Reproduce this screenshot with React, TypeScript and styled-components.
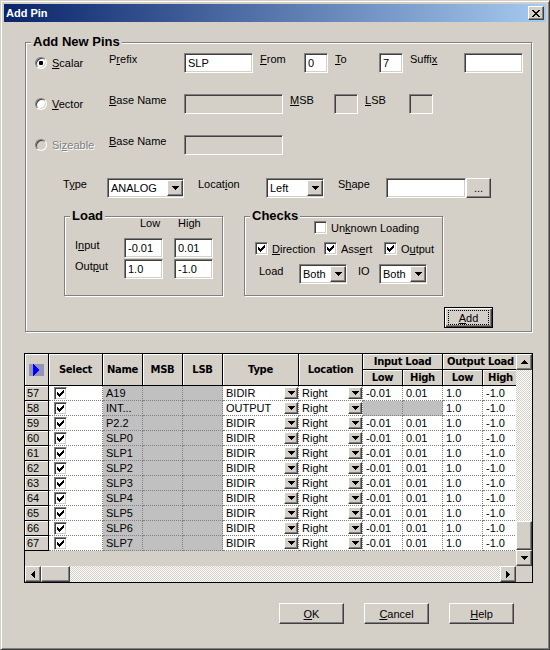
import React from 'react';
import styled, { createGlobalStyle, css } from 'styled-components';

const FACE = '#D4D0C8';
const SHADOW = '#808080';
const DARK = '#404040';
const UI_FONT = '"Liberation Sans", Arial, sans-serif';
const GRID_FONT = '"DejaVu Sans", Verdana, sans-serif';

const GlobalStyle = createGlobalStyle`
  html, body {
    margin: 0;
    padding: 0;
    background: ${FACE};
  }
  * {
    box-sizing: border-box;
  }
`;

const raised = css`
  border: 1px solid;
  border-color: #fff ${DARK} ${DARK} #fff;
  box-shadow: inset -1px -1px ${SHADOW};
  background: ${FACE};
`;

const sunken = css`
  border: 1px solid;
  border-color: ${SHADOW} #fff #fff ${SHADOW};
  box-shadow: inset 1px 1px ${DARK}, inset -1px -1px ${FACE};
`;

const checker = css`
  background-image: repeating-conic-gradient(#fff 0% 25%, ${FACE} 0% 50%);
  background-size: 2px 2px;
`;

const Window = styled.div`
  width: 550px;
  height: 650px;
  display: flex;
  flex-direction: column;
  background: ${FACE};
  border: 1px solid;
  border-color: ${FACE} ${DARK} ${DARK} ${FACE};
  box-shadow: inset 1px 1px #fff, inset -1px -1px ${SHADOW};
  padding: 3px;
  font-family: ${UI_FONT};
  font-size: 11px;
  color: #000;
`;

const TitleBar = styled.div`
  height: 18px;
  flex: none;
  display: flex;
  align-items: center;
  justify-content: space-between;
  padding: 0 2px;
  background: linear-gradient(to right, #0a246a, #a6caf0);
`;

const TitleText = styled.span`
  color: #fff;
  font-weight: bold;
  font-size: 11px;
`;

const CloseButton = styled.div`
  ${raised}
  width: 16px;
  height: 14px;
  display: flex;
  align-items: center;
  justify-content: center;
`;

const Body = styled.div`
  flex: 1;
  display: flex;
  flex-direction: column;
  align-items: flex-start;
  padding: 20px 14px 0 20px;
`;

const GroupBox = styled.div<{ $w: number; $h: number; $pad: string }>`
  position: relative;
  flex: none;
  width: ${p => p.$w}px;
  height: ${p => p.$h}px;
  padding: ${p => p.$pad};
  border: 1px solid ${SHADOW};
  box-shadow: inset 1px 1px #fff, 1px 1px #fff;
  display: flex;
  flex-direction: column;
  align-items: flex-start;
`;

const MainGroup = styled(GroupBox)`
  margin-left: 1px;
`;

const Legend = styled.span`
  position: absolute;
  top: -9px;
  left: 5px;
  padding: 0 2px;
  background: ${FACE};
  font-weight: bold;
  font-size: 13px;
  line-height: 15px;
  white-space: nowrap;
`;

const K = styled.span`
  text-decoration: underline;
`;

const FormRow = styled.div<{ $mt?: number; $ml?: number }>`
  display: flex;
  align-items: flex-start;
  flex: none;
  margin-top: ${p => p.$mt ?? 0}px;
  margin-left: ${p => p.$ml ?? 0}px;
`;

const RadioOption = styled.label<{ $disabled?: boolean }>`
  width: 74px;
  height: 20px;
  flex: none;
  display: flex;
  align-items: center;
  gap: 5px;
  color: ${p => (p.$disabled ? SHADOW : '#000')};
  text-shadow: ${p => (p.$disabled ? '1px 1px #fff' : 'none')};
`;

const Radio = styled.span<{ $checked?: boolean; $disabled?: boolean }>`
  width: 12px;
  height: 12px;
  flex: none;
  border-radius: 50%;
  border: 1px solid;
  border-color: ${SHADOW} #fff #fff ${SHADOW};
  box-shadow: inset 1px 1px ${DARK}, inset -1px -1px ${FACE};
  background: ${p => (p.$disabled ? FACE : '#fff')};
  display: flex;
  align-items: center;
  justify-content: center;

  &::after {
    content: '';
    display: ${p => (p.$checked ? 'block' : 'none')};
    width: 4px;
    height: 4px;
    border-radius: 1px;
    background: #000;
  }
`;

const Label = styled.span<{ $w?: number; $pl?: number }>`
  width: ${p => (p.$w ? `${p.$w}px` : 'auto')};
  flex: none;
  padding-left: ${p => p.$pl ?? 0}px;
  line-height: 13px;
  white-space: nowrap;
`;

const TextBox = styled.div<{ $w: number; $disabled?: boolean }>`
  ${sunken}
  width: ${p => p.$w}px;
  height: 20px;
  flex: none;
  background: ${p => (p.$disabled ? FACE : '#fff')};
  padding-left: 3px;
  display: flex;
  align-items: center;
  white-space: nowrap;
  overflow: hidden;
`;

const Combo = styled.div<{ $w: number }>`
  ${sunken}
  width: ${p => p.$w}px;
  height: 20px;
  flex: none;
  background: #fff;
  padding-left: 3px;
  display: flex;
  align-items: center;
  justify-content: space-between;
  white-space: nowrap;
`;

const DropButton = styled.span<{ $w: number; $h: number }>`
  ${raised}
  width: ${p => p.$w}px;
  height: ${p => p.$h}px;
  flex: none;
  display: flex;
  align-items: center;
  justify-content: center;
`;

const PushButton = styled.div<{ $w: number; $h: number }>`
  ${raised}
  width: ${p => p.$w}px;
  height: ${p => p.$h}px;
  flex: none;
  display: flex;
  align-items: center;
  justify-content: center;
`;

const DefaultButton = styled.div`
  width: 49px;
  height: 21px;
  flex: none;
  border: 1px solid #000;
  box-shadow: inset 1px 1px #fff, inset -1px -1px ${DARK}, inset -2px -2px ${SHADOW};
  background: ${FACE};
  padding: 2px 3px;
  display: flex;
`;

const FocusRect = styled.span`
  flex: 1;
  border: 1px dotted #000;
  display: flex;
  align-items: center;
  justify-content: center;
`;

const LoadGrid = styled.div`
  display: grid;
  grid-template-columns: 38px 39px 39px;
  grid-template-rows: 20px 20px 20px;
  column-gap: 11px;
  row-gap: 1px;
`;

const RowLabel = styled(Label)`
  padding-top: 1px;
`;

const CheckRow = styled.div<{ $mt?: number; $ml?: number }>`
  display: flex;
  flex: none;
  margin-top: ${p => p.$mt ?? 0}px;
  margin-left: ${p => p.$ml ?? 0}px;
`;

const CheckItem = styled.label<{ $w?: number }>`
  width: ${p => (p.$w ? `${p.$w}px` : 'auto')};
  height: 13px;
  flex: none;
  display: flex;
  align-items: center;
  gap: 4px;
  white-space: nowrap;
`;

const CheckBox = styled.span`
  ${sunken}
  width: 13px;
  height: 13px;
  flex: none;
  background: #fff;
  display: flex;
  align-items: center;
  justify-content: center;
`;

const GroupSpacer = styled.span`
  width: 21px;
  flex: none;
`;

/* ---- grid ---- */

const GridFrame = styled.div`
  margin-top: 21px;
  width: 509px;
  height: 230px;
  flex: none;
  border: 1px solid #000;
  background: ${FACE};
  display: flex;
  flex-direction: column;
`;

const GridMain = styled.div`
  height: 212px;
  flex: none;
  display: flex;
`;

const Sheet = styled.div`
  flex: 1;
  min-width: 0;
  overflow: hidden;
  display: grid;
  grid-template-columns: 24px 54px 40px 40px 40px 76px 64px 40px 40px 40px 36px;
  grid-template-rows: 16px 16px;
  grid-auto-rows: 15px;
  align-content: start;
  font-size: 11px;
`;

const HeadCell = styled.div<{ $rows?: number; $cols?: number }>`
  grid-row: span ${p => p.$rows ?? 1};
  grid-column: span ${p => p.$cols ?? 1};
  background: ${FACE};
  border-right: 1px solid #000;
  border-bottom: 1px solid #000;
  box-shadow: inset 1px 1px #fff;
  display: flex;
  align-items: center;
  justify-content: center;
  font-family: ${GRID_FONT};
  font-weight: bold;
  font-size: 10px;
  letter-spacing: -0.3px;
  white-space: nowrap;
  overflow: hidden;
`;

const RowHead = styled.div`
  background: ${FACE};
  border-right: 1px solid #000;
  border-bottom: 1px solid #000;
  box-shadow: inset 1px 1px #fff;
  padding-left: 2px;
  display: flex;
  align-items: center;
`;

const Cell = styled.div<{ $ro?: boolean }>`
  background: ${p => (p.$ro ? '#C0C0C0' : '#fff')};
  border-right: 1px dotted ${SHADOW};
  border-bottom: 1px dotted ${SHADOW};
  padding-left: 3px;
  display: flex;
  align-items: center;
  justify-content: space-between;
  white-space: nowrap;
  overflow: hidden;
`;

const CheckCell = styled(Cell)`
  padding-left: 5px;
  justify-content: flex-start;
`;

const VScroll = styled.div`
  width: 16px;
  flex: none;
  display: flex;
  flex-direction: column;
`;

const HScrollRow = styled.div`
  height: 16px;
  flex: none;
  display: flex;
`;

const HScroll = styled.div`
  flex: 1;
  display: flex;
`;

const ScrollButton = styled.span`
  ${raised}
  width: 16px;
  height: 16px;
  flex: none;
  display: flex;
  align-items: center;
  justify-content: center;
`;

const Track = styled.span`
  flex: 1;
  ${checker}
`;

const Thumb = styled.span<{ $vertical?: boolean }>`
  ${raised}
  flex: none;
  width: ${p => (p.$vertical ? '16px' : '29px')};
  height: ${p => (p.$vertical ? '29px' : '16px')};
`;

const Corner = styled.span`
  width: 16px;
  height: 16px;
  flex: none;
  background: ${FACE};
`;

const ButtonRow = styled.div`
  align-self: stretch;
  display: flex;
  justify-content: flex-end;
  gap: 20px;
  margin-top: 20px;
  padding-right: 18px;
`;

/* ---- drawings ---- */

type Dir = 'up' | 'down' | 'left' | 'right';

const Tri: React.FC<{ dir: Dir }> = ({ dir }) => {
  const vertical = dir === 'up' || dir === 'down';
  const spans = [7, 5, 3, 1];
  return (
    <svg width={vertical ? 7 : 4} height={vertical ? 4 : 7} shapeRendering="crispEdges" style={{ display: 'block' }}>
      {spans.map((len, i) => {
        const off = (7 - len) / 2;
        const pos = dir === 'down' || dir === 'right' ? i : 3 - i;
        return vertical ? (
          <rect key={i} x={off} y={pos} width={len} height={1} fill="#000" />
        ) : (
          <rect key={i} x={pos} y={off} width={1} height={len} fill="#000" />
        );
      })}
    </svg>
  );
};

const CloseGlyph = () => (
  <svg width="8" height="7" shapeRendering="crispEdges" style={{ display: 'block' }}>
    {[0, 1, 2, 3, 4, 5, 6].map(r => {
      const d = Math.min(r, 6 - r);
      return (
        <g key={r}>
          <rect x={d} y={r} width={2} height={1} fill="#000" />
          <rect x={6 - d} y={r} width={2} height={1} fill="#000" />
        </g>
      );
    })}
  </svg>
);

const CheckMark = () => (
  <svg width="7" height="7" shapeRendering="crispEdges" style={{ display: 'block' }}>
    {[2, 3, 4, 3, 2, 1, 0].map((y, x) => (
      <rect key={x} x={x} y={y} width={1} height={3} fill="#000" />
    ))}
  </svg>
);

const RowPointer = () => (
  <svg width="15" height="12" shapeRendering="crispEdges" style={{ display: 'block' }}>
    <rect width="15" height="12" fill="#9494B8" />
    <polygon points="4,0 11,6 4,12" fill="#0000FF" />
  </svg>
);

const Checked = () => (
  <CheckBox>
    <CheckMark />
  </CheckBox>
);

/* ---- data ---- */

type Pin = { no: number; name: string; type: string; inLoad: boolean };

const pins: Pin[] = [
  { no: 57, name: 'A19', type: 'BIDIR', inLoad: true },
  { no: 58, name: 'INT...', type: 'OUTPUT', inLoad: false },
  { no: 59, name: 'P2.2', type: 'BIDIR', inLoad: true },
  ...Array.from({ length: 8 }, (_, i) => ({ no: 60 + i, name: `SLP${i}`, type: 'BIDIR', inLoad: true })),
];

export default function App() {
  return (
    <>
      <GlobalStyle />
      <Window>
        <TitleBar>
          <TitleText>Add Pin</TitleText>
          <CloseButton>
            <CloseGlyph />
          </CloseButton>
        </TitleBar>

        <Body>
          <MainGroup $w={507} $h={290} $pad="10px 0 0 9px">
            <Legend>Add New Pins</Legend>

            <FormRow>
              <RadioOption>
                <Radio $checked />
                <span><K>S</K>calar</span>
              </RadioOption>
              <Label $w={75}>P<K>r</K>efix</Label>
              <TextBox $w={69}>SLP</TextBox>
              <Label $w={51} $pl={7}><K>F</K>rom</Label>
              <TextBox $w={24}>0</TextBox>
              <Label $w={51} $pl={7}><K>T</K>o</Label>
              <TextBox $w={24}>7</TextBox>
              <Label $w={61} $pl={7}>Suffi<K>x</K></Label>
              <TextBox $w={59} />
            </FormRow>

            <FormRow $mt={21}>
              <RadioOption>
                <Radio />
                <span><K>V</K>ector</span>
              </RadioOption>
              <Label $w={75}><K>B</K>ase Name</Label>
              <TextBox $w={99} $disabled />
              <Label $w={51} $pl={7}><K>M</K>SB</Label>
              <TextBox $w={24} $disabled />
              <Label $w={51} $pl={7}><K>L</K>SB</Label>
              <TextBox $w={24} $disabled />
            </FormRow>

            <FormRow $mt={21}>
              <RadioOption $disabled>
                <Radio $disabled />
                <span>Si<K>z</K>eable</span>
              </RadioOption>
              <Label $w={75}><K>B</K>ase Name</Label>
              <TextBox $w={99} $disabled />
            </FormRow>

            <FormRow $mt={23} $ml={28}>
              <Label $w={44}>T<K>y</K>pe</Label>
              <Combo $w={77}>
                ANALOG
                <DropButton $w={16} $h={16}><Tri dir="down" /></DropButton>
              </Combo>
              <Label $w={82} $pl={14}>Locat<K>i</K>on</Label>
              <Combo $w={58}>
                Left
                <DropButton $w={16} $h={16}><Tri dir="down" /></DropButton>
              </Combo>
              <Label $w={62} $pl={14}>S<K>h</K>ape</Label>
              <TextBox $w={80} />
              <PushButton $w={25} $h={20}>...</PushButton>
            </FormRow>

            <FormRow $mt={18} $ml={29}>
              <GroupBox $w={159} $h={80} $pad="0 0 0 10px">
                <Legend>Load</Legend>
                <LoadGrid>
                  <span />
                  <Label $pl={16}>Low</Label>
                  <Label $pl={4}>High</Label>
                  <RowLabel>I<K>n</K>put</RowLabel>
                  <TextBox $w={39}>-0.01</TextBox>
                  <TextBox $w={39}>0.01</TextBox>
                  <RowLabel>Out<K>p</K>ut</RowLabel>
                  <TextBox $w={39}>1.0</TextBox>
                  <TextBox $w={39}>-1.0</TextBox>
                </LoadGrid>
              </GroupBox>

              <GroupSpacer />

              <GroupBox $w={199} $h={80} $pad="4px 0 0 0">
                <Legend>Checks</Legend>
                <CheckRow $ml={69}>
                  <CheckItem>
                    <CheckBox />
                    <span>Un<K>k</K>nown Loading</span>
                  </CheckItem>
                </CheckRow>
                <CheckRow $mt={8} $ml={10}>
                  <CheckItem $w={69}>
                    <Checked />
                    <span><K>D</K>irection</span>
                  </CheckItem>
                  <CheckItem $w={60}>
                    <Checked />
                    <span>Ass<K>e</K>rt</span>
                  </CheckItem>
                  <CheckItem>
                    <Checked />
                    <span>O<K>u</K>tput</span>
                  </CheckItem>
                </CheckRow>
                <FormRow $mt={9} $ml={14}>
                  <RowLabel $w={40}>Load</RowLabel>
                  <Combo $w={48}>
                    Both
                    <DropButton $w={16} $h={16}><Tri dir="down" /></DropButton>
                  </Combo>
                  <RowLabel $w={32} $pl={11}>IO</RowLabel>
                  <Combo $w={48}>
                    Both
                    <DropButton $w={16} $h={16}><Tri dir="down" /></DropButton>
                  </Combo>
                </FormRow>
              </GroupBox>
            </FormRow>

            <FormRow $mt={11} $ml={409}>
              <DefaultButton>
                <FocusRect><K>A</K>dd</FocusRect>
              </DefaultButton>
            </FormRow>
          </MainGroup>

          <GridFrame>
            <GridMain>
              <Sheet>
                <HeadCell $rows={2}><RowPointer /></HeadCell>
                <HeadCell $rows={2}>Select</HeadCell>
                <HeadCell $rows={2}>Name</HeadCell>
                <HeadCell $rows={2}>MSB</HeadCell>
                <HeadCell $rows={2}>LSB</HeadCell>
                <HeadCell $rows={2}>Type</HeadCell>
                <HeadCell $rows={2}>Location</HeadCell>
                <HeadCell $cols={2}>Input Load</HeadCell>
                <HeadCell $cols={2}>Output Load</HeadCell>
                <HeadCell>Low</HeadCell>
                <HeadCell>High</HeadCell>
                <HeadCell>Low</HeadCell>
                <HeadCell>High</HeadCell>

                {pins.map(pin => (
                  <React.Fragment key={pin.no}>
                    <RowHead>{pin.no}</RowHead>
                    <CheckCell><Checked /></CheckCell>
                    <Cell $ro>{pin.name}</Cell>
                    <Cell $ro />
                    <Cell $ro />
                    <Cell>
                      {pin.type}
                      <DropButton $w={14} $h={12}><Tri dir="down" /></DropButton>
                    </Cell>
                    <Cell>
                      Right
                      <DropButton $w={14} $h={12}><Tri dir="down" /></DropButton>
                    </Cell>
                    <Cell $ro={!pin.inLoad}>{pin.inLoad ? '-0.01' : ''}</Cell>
                    <Cell $ro={!pin.inLoad}>{pin.inLoad ? '0.01' : ''}</Cell>
                    <Cell>1.0</Cell>
                    <Cell>-1.0</Cell>
                  </React.Fragment>
                ))}
              </Sheet>

              <VScroll>
                <ScrollButton><Tri dir="up" /></ScrollButton>
                <Track />
                <Thumb $vertical />
                <ScrollButton><Tri dir="down" /></ScrollButton>
              </VScroll>
            </GridMain>

            <HScrollRow>
              <HScroll>
                <ScrollButton><Tri dir="left" /></ScrollButton>
                <Thumb />
                <Track />
                <ScrollButton><Tri dir="right" /></ScrollButton>
              </HScroll>
              <Corner />
            </HScrollRow>
          </GridFrame>

          <ButtonRow>
            <PushButton $w={65} $h={21}><K>O</K>K</PushButton>
            <PushButton $w={65} $h={21}><K>C</K>ancel</PushButton>
            <PushButton $w={65} $h={21}><K>H</K>elp</PushButton>
          </ButtonRow>
        </Body>
      </Window>
    </>
  );
}
